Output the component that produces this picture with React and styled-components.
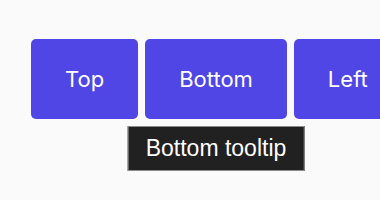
import styled, { createGlobalStyle } from "styled-components"

const GlobalStyle = createGlobalStyle`
    html, body {
        margin: 0;
        padding: 0;
        background-color: #fafafa;
        overflow: hidden;
    }
`

const items = [
    { label: "Top" },
    { label: "Bottom", tooltip: "Bottom tooltip" },
    { label: "Left" },
]

export default function App() {
    return (
        <>
            <GlobalStyle />
            <Page>
                <Row>
                    {items.map((item) => (
                        <Anchor key={item.label}>
                            <Button>{item.label}</Button>
                            {item.tooltip && <Tooltip>{item.tooltip}</Tooltip>}
                        </Anchor>
                    ))}
                </Row>
            </Page>
        </>
    )
}

const Page = styled.div`
    width: 380px;
    height: 200px;
    padding: 39px 0 0 31px;
    box-sizing: border-box;
    overflow: hidden;
`

const Row = styled.div`
    display: flex;
    flex-wrap: nowrap;
    gap: 7px;
`

const Anchor = styled.div`
    position: relative;
    flex-shrink: 0;
`

const Button = styled.button`
    height: 80px;
    padding: 0 34px;
    border: none;
    border-radius: 5px;
    background-color: #4f46e5;
    color: #ffffff;
    font-family: Inter, "Noto Sans", sans-serif;
    font-size: 22px;
    cursor: pointer;
`

const Tooltip = styled.div`
    position: absolute;
    top: 87px;
    left: 50%;
    transform: translateX(-50%);
    height: 45px;
    padding: 0 17px;
    box-sizing: border-box;
    line-height: 43px;
    white-space: nowrap;
    background-color: #212121;
    border: 1px solid #8a8a8a;
    color: #ffffff;
    font-family: "Liberation Sans", Arial, sans-serif;
    font-size: 23px;
`
